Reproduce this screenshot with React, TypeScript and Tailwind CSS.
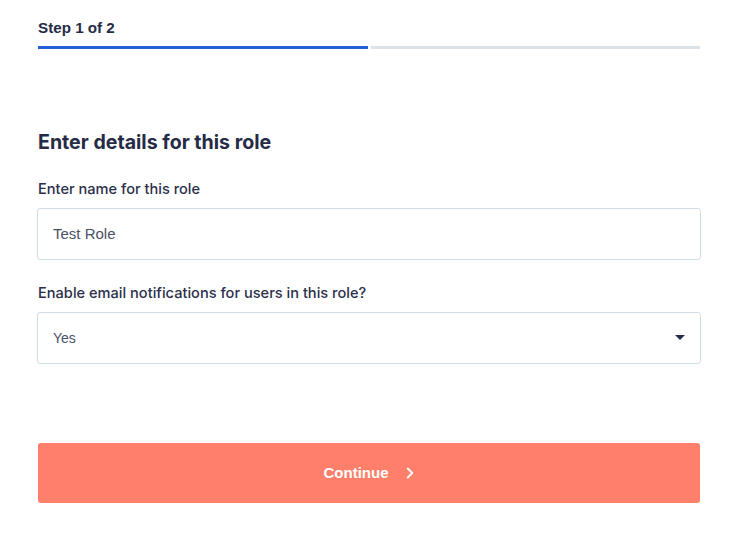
import { ChevronRight } from 'lucide-react';

function Field({ label, children }: { label: string; children: React.ReactNode }) {
  return (
    <div className="flex flex-col">
      <label className="text-[14.6px] font-medium leading-[20px] text-[#2b2f4a] mb-[9px] px-px" style={{ fontFamily: 'Inter, sans-serif' }}>
        {label}
      </label>
      {children}
    </div>
  );
}

export default function App() {
  return (
    <div className="w-[740px] h-[536px] bg-white pl-[38px] pr-[40px] pt-[18px]" style={{ fontFamily: '"Liberation Sans", Arial, sans-serif' }}>
      <div className="text-[15.2px] font-bold leading-[20px] text-[#262b45]">Step 1 of 2</div>
      <div className="flex gap-[3px] mt-[8px]">
        <div className="h-[3px] flex-1 bg-[#2461d9]" />
        <div className="h-[3px] flex-1 bg-[#dce3e8]" />
      </div>

      <h2 className="mt-[80px] text-[19.6px] font-bold leading-[26px] text-[#262b45]" style={{ fontFamily: 'Inter, sans-serif' }}>
        Enter details for this role
      </h2>

      <div className="mt-[24px] flex flex-col gap-[23px] -mx-px">
        <Field label="Enter name for this role">
          <div className="h-[52px] border border-[#d3dce6] rounded-[3px] flex items-center px-[15px] text-[15px] text-[#4b5068]">
            Test Role
          </div>
        </Field>
        <Field label="Enable email notifications for users in this role?">
          <div className="h-[52px] border border-[#d3dce6] rounded-[3px] flex items-center justify-between pl-[15px] pr-[15px] text-[14px] text-[#4b5068]">
            <span>Yes</span>
            <svg width="10" height="6" viewBox="0 0 10 6">
              <path d="M0 0 H10 L5 5 Z" fill="#262b45" />
            </svg>
          </div>
        </Field>
      </div>

      <button className="mt-[79px] w-full h-[60px] rounded-[3px] bg-[#ff7f6a] text-white text-[15px] font-bold flex items-center justify-center gap-[12px] pl-[4px]">
        Continue
        <ChevronRight size={18} strokeWidth={2.5} />
      </button>
    </div>
  );
}
